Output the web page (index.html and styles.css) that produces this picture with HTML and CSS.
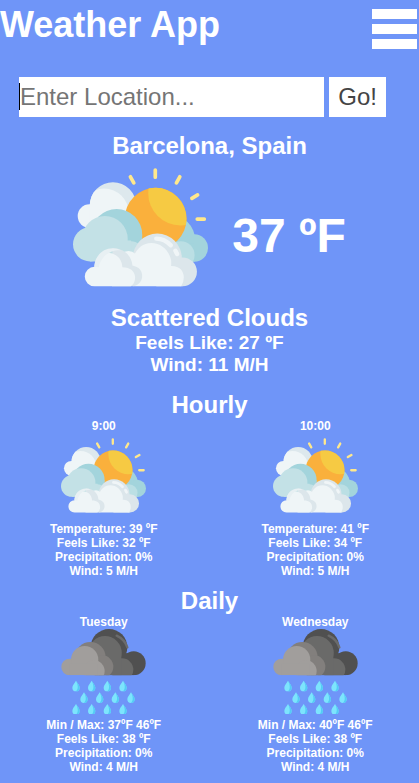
FILE: index.html
```html
<!DOCTYPE html>
<html lang="en">
<head>
<meta charset="utf-8">
<meta name="viewport" content="width=device-width, initial-scale=1">
<title>Weather App</title>
<link rel="stylesheet" href="styles.css">
</head>
<body>
<svg class="sprite" aria-hidden="true">
  <defs>
    <clipPath id="sun-clip"><circle cx="288" cy="175" r="92"/></clipPath>
    <clipPath id="back-clip"><circle cx="161" cy="135" r="69"/></clipPath>
    <clipPath id="rain-clip"><path d="M30 20h265v146H30z"/></clipPath>
  </defs>
  <symbol id="scattered-clouds" viewBox="42 0 402 402">
    <g stroke="#ffe88c" stroke-width="11" stroke-linecap="round">
      <path d="M287 30V51M213 50l10 18M360 50l-10 18M413 104l-17 10M412 176h21"/>
    </g>
    <circle cx="161" cy="135" r="69" fill="#dde8ed"/>
    <g fill="#eff5f7">
      <circle cx="135" cy="158" r="73" clip-path="url(#back-clip)"/>
      <circle cx="91" cy="167" r="35"/>
      <path d="M91 150h120v52H91z"/>
    </g>
    <g fill="#a3d4dc">
      <circle cx="328" cy="240" r="78"/>
      <circle cx="403" cy="262" r="41"/>
      <path d="M320 250h84v53h-84z"/>
    </g>
    <circle cx="363" cy="283" r="41" fill="#bbdfe4"/>
    <circle cx="288" cy="175" r="92" fill="#fab03c"/>
    <circle cx="362" cy="99" r="96" fill="#f6ca43" clip-path="url(#sun-clip)"/>
    <g fill="#a3d4dc">
      <circle cx="172" cy="222" r="76"/>
      <path d="M160 222h88v80h-88z"/>
    </g>
    <g fill="#c3e1e6">
      <circle cx="93" cy="251" r="51"/>
      <circle cx="137" cy="235" r="68"/>
      <circle cx="215" cy="275" r="33"/>
      <path d="M93 240h122v62H93z"/>
    </g>
    <g fill="#dce6eb">
      <circle cx="293" cy="292" r="73"/>
      <circle cx="368" cy="333" r="43"/>
      <path d="M290 320h78v56h-78z"/>
    </g>
    <g fill="#eff5f7">
      <path d="M220 376v-75c4-32 27-54 55-54 30 0 53 22 59 51q1 9 0 18c25-1 38 15 38 33q0 15-8 27z"/>
      <circle cx="207" cy="301" r="30"/>
    </g>
    <path d="M290 234c17 0 32 8 43 20M347 270l5 10" fill="none" stroke="#f0f5f7" stroke-width="13" stroke-linecap="round"/>
    <path d="M160 263c34 0 57 22 59 51 20 5 29 15 29 31 0 19-14 31-30 31h-60z" fill="#dce6eb"/>
    <path d="M106 376a29 29 0 0 1 0-58c3-30 17-42 37-42 27 0 45 18 46 43 24 0 38 12 38 32q0 17-13 25z" fill="#eff5f7"/>
    <path d="M105 318c2-31 25-55 55-55q14 0 25 6c-20-3-57 8-66 50z" fill="#e8f0f3"/>
  </symbol>
  <symbol id="rain" viewBox="35 27 255 255">
    <g clip-path="url(#rain-clip)">
      <g fill="#505050">
        <circle cx="179" cy="82" r="55"/>
        <circle cx="253" cy="130" r="36"/>
        <path d="M170 100h83v66h-83z"/>
      </g>
      <path d="M202 47q24 11 32 35" fill="none" stroke="#6b6b6b" stroke-width="7" stroke-linecap="round"/>
      <g fill="#6a6a69">
        <circle cx="167" cy="98" r="50"/>
        <circle cx="218" cy="149" r="34"/>
        <path d="M150 90h66v76h-66z"/>
      </g>
      <g fill="#827f7d">
        <circle cx="123" cy="112" r="46"/>
        <circle cx="158" cy="140" r="34"/>
        <path d="M110 120h48v46h-48z"/>
      </g>
      <g fill="#a19e9c">
        <circle cx="61" cy="141" r="25"/>
        <circle cx="106" cy="119" r="41"/>
        <circle cx="134" cy="153" r="32"/>
        <path d="M61 130h84v36H61z"/>
      </g>
    </g>
    <g id="drops-even">
      <g id="drop">
        <path d="M80 182c5 8 11 14 11 21a11 11 0 0 1-22 0c0-7 6-13 11-21z" fill="#7de4fd"/>
        <path d="M80 182c5 8 11 14 11 21a11 11 0 0 1-11 11c8-8 6-20 0-32z" fill="#55cbf5"/>
      </g>
      <use href="#drop" x="47"/>
      <use href="#drop" x="94"/>
      <use href="#drop" x="141"/>
    </g>
    <use href="#drops-even" x="24" y="35"/>
    <use href="#drops-even" y="70"/>
  </symbol>
</svg>

<header class="topbar">
  <h1 class="brand">Weather App</h1>
  <button class="menu" type="button" aria-label="Menu">
    <span class="menu-bar"></span>
    <span class="menu-bar"></span>
    <span class="menu-bar"></span>
  </button>
</header>

<main>
  <form class="search">
    <div class="search-field">
      <input class="search-input" type="text" aria-label="Location" placeholder="Enter Location...">
    </div>
    <button class="search-button" type="button">Go!</button>
  </form>

  <section class="current">
    <h2 class="heading">Barcelona, Spain</h2>
    <div class="current-row">
      <svg class="icon-large" role="img" aria-label="Scattered clouds"><use href="#scattered-clouds"/></svg>
      <p class="current-temp">37 ºF</p>
    </div>
    <h2 class="heading">Scattered Clouds</h2>
    <p class="detail">Feels Like: 27 ºF</p>
    <p class="detail">Wind: 11 M/H</p>
  </section>

  <section class="forecast forecast-hourly">
    <h2 class="heading">Hourly</h2>
    <div class="forecast-grid">
      <article class="card">
        <h3 class="card-title">9:00</h3>
        <svg class="icon" role="img" aria-label="Scattered clouds"><use href="#scattered-clouds"/></svg>
        <p>Temperature: 39 ºF</p>
        <p>Feels Like: 32 ºF</p>
        <p>Precipitation: 0%</p>
        <p>Wind: 5 M/H</p>
      </article>
      <article class="card">
        <h3 class="card-title">10:00</h3>
        <svg class="icon" role="img" aria-label="Scattered clouds"><use href="#scattered-clouds"/></svg>
        <p>Temperature: 41 ºF</p>
        <p>Feels Like: 34 ºF</p>
        <p>Precipitation: 0%</p>
        <p>Wind: 5 M/H</p>
      </article>
    </div>
  </section>

  <section class="forecast">
    <h2 class="heading">Daily</h2>
    <div class="forecast-grid">
      <article class="card">
        <h3 class="card-title">Tuesday</h3>
        <svg class="icon" role="img" aria-label="Rain"><use href="#rain"/></svg>
        <p>Min / Max: 37ºF 46ºF</p>
        <p>Feels Like: 38 ºF</p>
        <p>Precipitation: 0%</p>
        <p>Wind: 4 M/H</p>
      </article>
      <article class="card">
        <h3 class="card-title">Wednesday</h3>
        <svg class="icon" role="img" aria-label="Rain"><use href="#rain"/></svg>
        <p>Min / Max: 40ºF 46ºF</p>
        <p>Feels Like: 38 ºF</p>
        <p>Precipitation: 0%</p>
        <p>Wind: 4 M/H</p>
      </article>
    </div>
  </section>
</main>
</body>
</html>
```
FILE: styles.css
```css
* {
  box-sizing: border-box;
  margin: 0;
  padding: 0;
}

body {
  background: #6f95f8;
  color: #fff;
  font-family: Arial, "Liberation Sans", sans-serif;
  font-weight: bold;
  text-align: center;
  overflow-x: hidden;
}

.sprite {
  position: absolute;
  width: 0;
  height: 0;
}

.topbar {
  display: flex;
  justify-content: space-between;
  align-items: flex-start;
  padding: 4px 2px 0 0;
}

.brand {
  font-size: 36px;
  line-height: 41px;
}

.menu {
  display: flex;
  flex-direction: column;
  gap: 5px;
  width: 45px;
  margin-top: 5px;
  border: 0;
  background: none;
  cursor: pointer;
}

.menu-bar {
  height: 10px;
  width: 100%;
  background: #fff;
}

.search {
  display: flex;
  gap: 5px;
  padding: 28px 33px 15px 19px;
}

.search-field {
  position: relative;
  flex: 1;
  min-width: 0;
}

.search-field::before {
  content: "";
  position: absolute;
  left: 0;
  top: 6px;
  width: 1px;
  height: 27px;
  background: #000;
}

.search-input,
.search-button {
  display: block;
  height: 40px;
  border: 0;
  border-radius: 0;
  background: #fff;
  color: #444;
  font-family: inherit;
  font-size: 24px;
}

.search-input {
  width: 100%;
  padding-left: 1px;
  outline: 0;
}

.search-input::placeholder {
  color: #757575;
}

.search-button {
  padding: 0 9px;
  cursor: pointer;
}

.heading {
  font-size: 24px;
  line-height: 28px;
}

.current-row {
  display: flex;
  justify-content: center;
  align-items: center;
  gap: 24px;
  margin-bottom: 9px;
}

.icon-large {
  width: 135px;
  height: 135px;
}

.current-temp {
  padding-top: 16px;
  font-size: 48px;
  line-height: 55px;
}

.detail {
  font-size: 19px;
  line-height: 22px;
}

.forecast {
  padding-top: 9px;
}

.forecast-hourly {
  padding-top: 15px;
}

.forecast-grid {
  display: grid;
  grid-template-columns: 1fr 1fr;
  gap: 4px;
}

.card {
  font-size: 12px;
  line-height: 14px;
}

.card-title {
  font-size: 12px;
}

.icon {
  display: block;
  width: 85px;
  height: 85px;
  margin: 0 auto 4px;
}
```
